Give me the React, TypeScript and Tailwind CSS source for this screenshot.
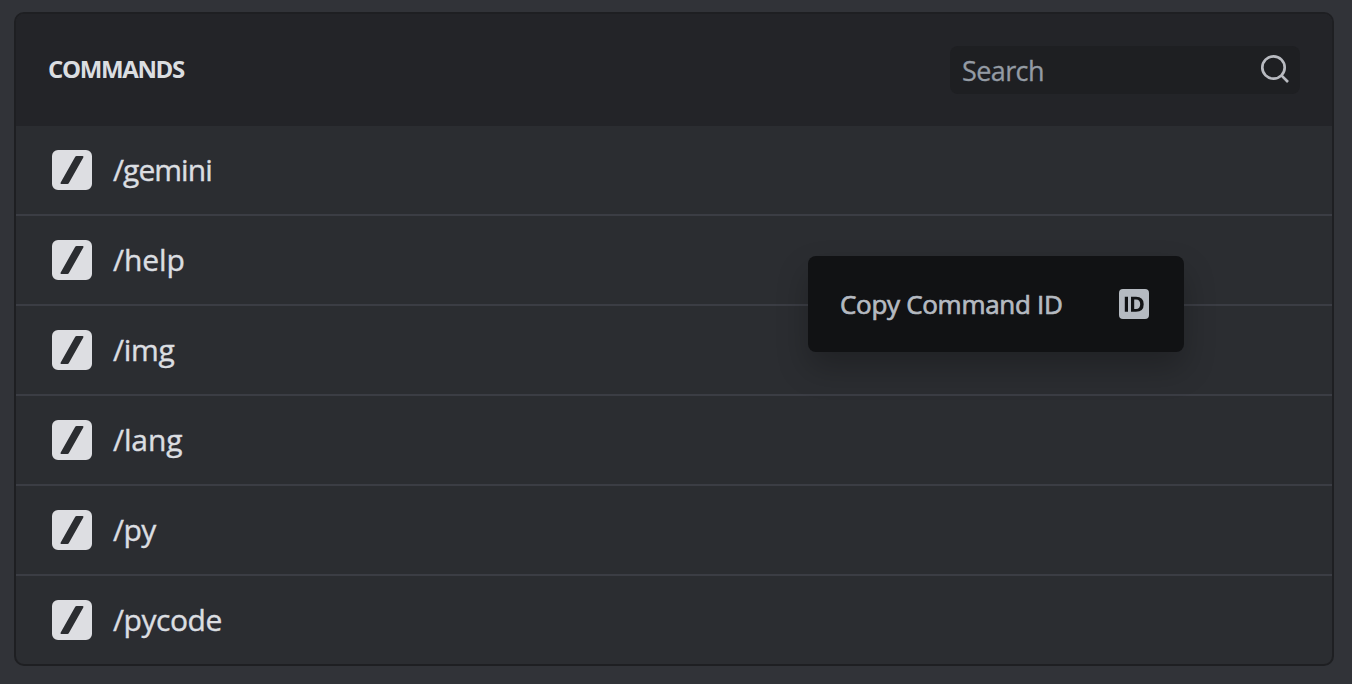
const commands = [
  { name: "/gemini", tracking: "tracking-[-0.95px]" },
  { name: "/help", tracking: "tracking-[-0.1px]" },
  { name: "/img", tracking: "tracking-[-0.3px]" },
  { name: "/lang", tracking: "tracking-[-0.1px]" },
  { name: "/py", tracking: "tracking-[-0.6px]" },
  { name: "/pycode", tracking: "tracking-[-0.45px]" },
];

function SlashIcon() {
  return (
    <svg className="size-10 shrink-0" viewBox="0 0 40 40" aria-hidden="true">
      <path
        fill="#dddee2"
        fillRule="evenodd"
        d="M6 0H34A6 6 0 0 1 40 6V34A6 6 0 0 1 34 40H6A6 6 0 0 1 0 34V6A6 6 0 0 1 6 0ZM24.6 6Q23.6 6 23.1 6.9L8.7 32.5Q8 34 9.4 34H15.4Q16.4 34 16.9 33.1L31.3 7.5Q32 6 30.6 6Z"
      />
    </svg>
  );
}

function SearchIcon() {
  return (
    <svg className="size-8 shrink-0" viewBox="0 0 32 32" fill="none" stroke="#b8bac0" strokeWidth="2.7" aria-hidden="true">
      <circle cx="14.5" cy="13.5" r="11.2" />
      <path d="M22.4 21.4L29 28" />
    </svg>
  );
}

export default function App() {
  return (
    <div className="relative h-[684px] w-[1352px] overflow-hidden bg-[#313338] pl-[14px] pt-3 font-['Open_Sans',sans-serif]">
      <section className="h-[654px] w-[1320px] overflow-hidden rounded-[10px] border-2 border-[#1e1f22] bg-[#2b2d31]">
        <header className="flex h-28 items-center justify-between bg-[#232428] px-8">
          <h1 className="pb-0.5 text-[24px] font-bold leading-8 tracking-[-1.35px] text-[#dbdee1]">COMMANDS</h1>
          <div className="flex h-12 w-[350px] items-center justify-between rounded-lg bg-[#1e1f22] pl-3 pr-[9px]">
            <span className="pt-px text-[27px] leading-8 tracking-[-0.6px] text-[#949ba4] [-webkit-text-stroke:0.3px_#949ba4]">
              Search
            </span>
            <SearchIcon />
          </div>
        </header>
        <ul className="divide-y-2 divide-[#3b3d44]">
          {commands.map((command) => (
            <li key={command.name} className="box-content flex h-[88px] items-center gap-[21px] pl-9">
              <SlashIcon />
              <span
                className={`text-[30px] leading-10 text-[#dbdee1] [-webkit-text-stroke:0.4px_#dbdee1] ${command.tracking}`}
              >
                {command.name}
              </span>
            </li>
          ))}
        </ul>
      </section>
      <div className="absolute left-[808px] top-[256px] flex h-24 w-[376px] items-center justify-between rounded-lg bg-[#111214] pl-8 pr-[35px] shadow-[0_16px_32px_rgba(0,0,0,0.24)]">
        <span className="text-[26px] leading-8 tracking-[-0.3px] text-[#b5bac1] [-webkit-text-stroke:0.7px_#b5bac1]">
          Copy Command ID
        </span>
        <svg className="size-[30px] shrink-0" viewBox="0 0 30 30" aria-hidden="true">
          <path
            fill="#b5bac1"
            fillRule="evenodd"
            d="M4 0H26Q30 0 30 4V26Q30 30 26 30H4Q0 30 0 26V4Q0 0 4 0ZM5.8 7.8V22.8H9V7.8ZM12 7.8V22.8H17Q24.7 22.8 24.7 15.3T17 7.8ZM15.2 10.6H17Q21.2 10.6 21.2 15.3T17 20H15.2Z"
          />
        </svg>
      </div>
    </div>
  );
}
